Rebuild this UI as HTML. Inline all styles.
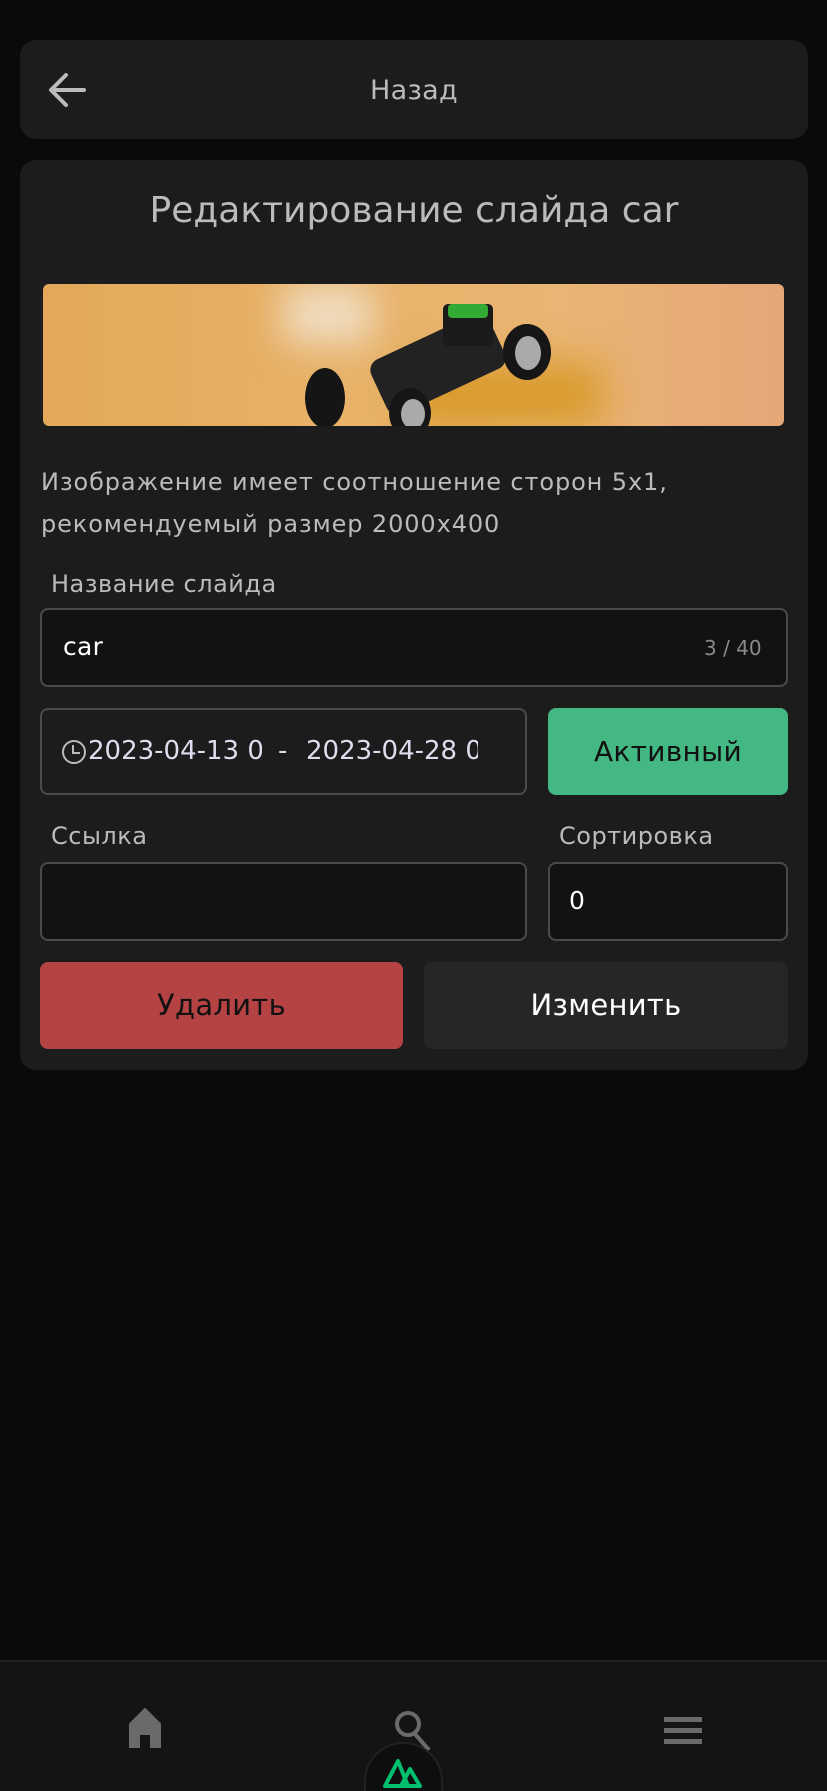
<!DOCTYPE html>
<html><head><meta charset="utf-8"><style>
*{box-sizing:border-box;margin:0;padding:0}
html,body{width:827px;height:1791px;overflow:hidden}
body{background:#0a0a0a;font-family:"DejaVu Sans","Liberation Sans",sans-serif;position:relative;color:#bbb;letter-spacing:0.3px}
.card{position:absolute;left:20px;width:788px;background:#1c1c1c;border-radius:16px}
.abs{position:absolute}
.inp{position:absolute;border:2px solid #4a4a4a;border-radius:8px;background:#121212}
.lbl{position:absolute;font-size:24px;color:#bbb;letter-spacing:0.5px}
</style></head><body>
<div class="card" style="top:40px;height:99px">
<svg class="abs" style="left:27px;top:31px" width="40" height="38" viewBox="0 0 40 38"><path d="M37 19H5M19 4L4 19l15 15" stroke="#bbb" stroke-width="4" fill="none" stroke-linecap="round" stroke-linejoin="round"/></svg>
<div class="abs" style="left:0;width:788px;top:35px;text-align:center;font-size:27px;color:#bbb">Назад</div>
</div>
<div class="card" style="top:160px;height:910px">
<div class="abs" style="left:0;width:788px;top:30px;text-align:center;font-size:36px;color:#bbb;letter-spacing:0">Редактирование слайда car</div>
<div class="abs" style="left:23px;top:124px;width:741px;height:142px;border-radius:6px;overflow:hidden;background:linear-gradient(90deg,#e3a85a 0%,#e8b36a 45%,#e9b574 70%,#e4a878 100%)">
<div class="abs" style="left:240px;top:0;width:90px;height:60px;background:#f0dcc0;filter:blur(18px)"></div>
<div class="abs" style="left:360px;top:80px;width:200px;height:62px;background:#d99a2a;filter:blur(20px)"></div>
<div class="abs" style="left:330px;top:50px;width:130px;height:60px;background:#222;border-radius:12px;transform:rotate(-25deg)"></div>
<div class="abs" style="left:400px;top:20px;width:50px;height:42px;background:#1a1a1a;border-radius:5px"></div>
<div class="abs" style="left:405px;top:20px;width:40px;height:14px;background:#3a3;border-radius:4px"></div>
<div class="abs" style="left:262px;top:84px;width:40px;height:60px;background:#151515;border-radius:50%"></div>
<div class="abs" style="left:346px;top:104px;width:42px;height:50px;background:#161616;border-radius:50%"></div>
<div class="abs" style="left:358px;top:115px;width:24px;height:30px;background:#aaa;border-radius:50%"></div>
<div class="abs" style="left:460px;top:40px;width:48px;height:56px;background:#161616;border-radius:50%"></div>
<div class="abs" style="left:472px;top:52px;width:26px;height:34px;background:#aaa;border-radius:50%"></div>
</div>
<div class="abs" style="left:21px;top:301px;font-size:24px;line-height:42px;color:#bbb;letter-spacing:0.9px;white-space:nowrap">Изображение имеет соотношение сторон 5x1,<br>рекомендуемый размер 2000x400</div>
</div>
<div class="lbl" style="left:51px;top:570px">Название слайда</div>
<div class="inp" style="left:40px;top:608px;width:748px;height:79px"></div>
<div class="abs" style="left:63px;top:632px;font-size:25px;color:#fff">car</div>
<div class="abs" style="left:704px;top:636px;font-size:20px;color:#8a8a8a;letter-spacing:0">3 / 40</div>
<div class="inp" style="left:40px;top:708px;width:487px;height:87px;background:#1c1c1c"></div>
<svg class="abs" style="left:61px;top:739px" width="26" height="26" viewBox="0 0 26 26"><circle cx="13" cy="13" r="11" stroke="#bbb" stroke-width="2" fill="none"/><path d="M12 6v8h7" stroke="#bbb" stroke-width="2" fill="none"/></svg>
<div class="abs" style="left:88px;top:736px;font-size:26px;color:#dde;white-space:nowrap;width:174px;overflow:hidden;letter-spacing:0">2023-04-13 00:00</div>
<div class="abs" style="left:278px;top:736px;font-size:26px;color:#dde">-</div>
<div class="abs" style="left:306px;top:736px;font-size:26px;color:#dde;white-space:nowrap;width:172px;overflow:hidden;letter-spacing:0">2023-04-28 00:00</div>
<div class="abs" style="left:548px;top:708px;width:240px;height:87px;background:#43b883;border-radius:8px;text-align:center;line-height:87px;font-size:28px;color:#111">Активный</div>
<div class="lbl" style="left:51px;top:822px">Ссылка</div>
<div class="lbl" style="left:559px;top:822px">Сортировка</div>
<div class="inp" style="left:40px;top:862px;width:487px;height:79px"></div>
<div class="inp" style="left:548px;top:862px;width:240px;height:79px"></div>
<div class="abs" style="left:569px;top:886px;font-size:25px;color:#fff">0</div>
<div class="abs" style="left:40px;top:962px;width:363px;height:87px;background:#b54343;border-radius:8px;text-align:center;line-height:87px;font-size:29px;color:#111">Удалить</div>
<div class="abs" style="left:424px;top:962px;width:364px;height:87px;background:#262626;border-radius:8px;text-align:center;line-height:87px;font-size:29px;color:#fff">Изменить</div>
<div class="abs" style="left:0;top:1660px;width:827px;height:131px;background:#141414;border-top:2px solid #222;overflow:hidden">
<svg class="abs" style="left:127px;top:46px" width="36" height="40" viewBox="0 0 36 40"><path d="M18 1L33 16V40H24V26H12V40H3V16Z" fill="#6a6a6a" stroke="#6a6a6a" stroke-linejoin="round" stroke-width="2"/></svg>
<svg class="abs" style="left:394px;top:46px" width="40" height="44" viewBox="0 0 40 44"><circle cx="14" cy="16" r="11" stroke="#6a6a6a" stroke-width="4" fill="none"/><path d="M21 26l14 16" stroke="#6a6a6a" stroke-width="4"/></svg>
<div class="abs" style="left:664px;top:55px;width:38px;height:5px;background:#6a6a6a"></div>
<div class="abs" style="left:664px;top:66px;width:38px;height:5px;background:#6a6a6a"></div>
<div class="abs" style="left:664px;top:77px;width:38px;height:5px;background:#6a6a6a"></div>
<div class="abs" style="left:364px;top:80px;width:79px;height:90px;border-radius:40px;background:#0e0e0e;border:2px solid #222"></div>
<svg class="abs" style="left:383px;top:95px" width="42" height="32" viewBox="0 0 42 32"><path d="M2 29L15 4L25 29Z M18 29L27 12L37 29Z" stroke="#00c070" stroke-width="4" fill="none" stroke-linejoin="round"/></svg>
</div>
</body></html>
